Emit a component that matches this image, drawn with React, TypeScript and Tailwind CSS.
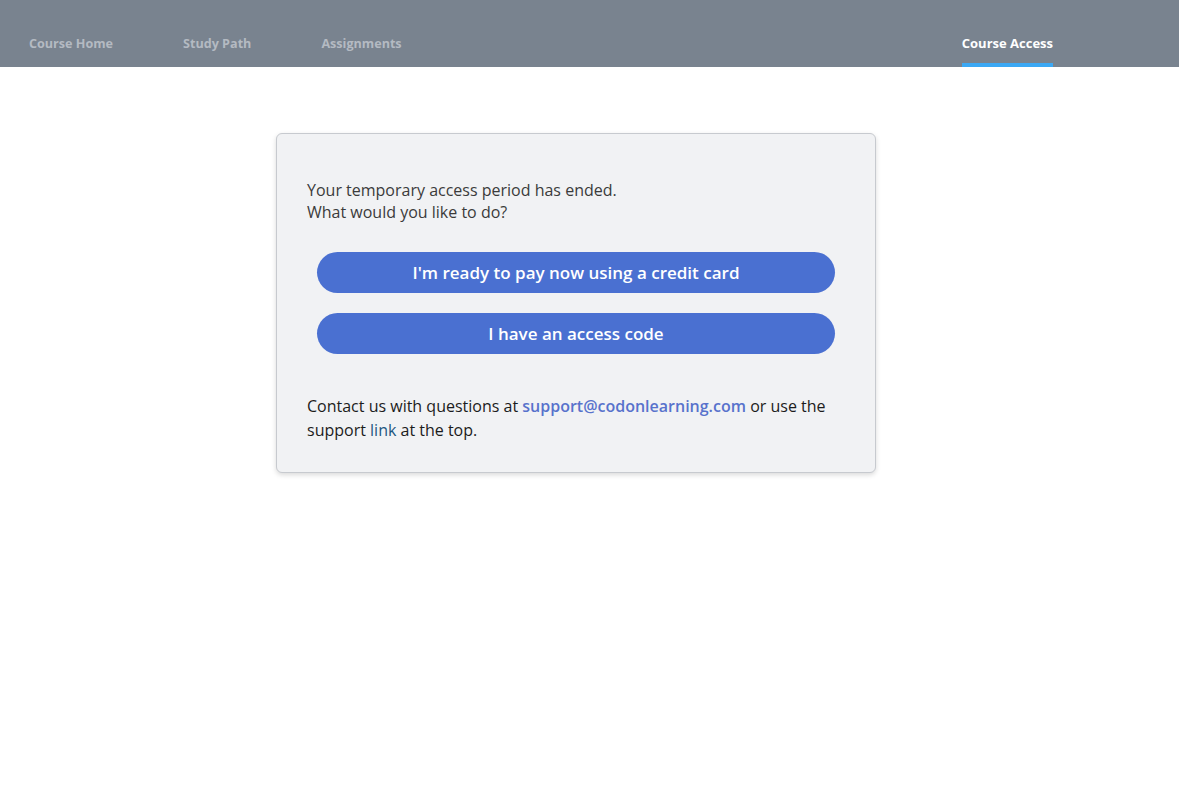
export default function App() {
  const font = { fontFamily: '"Open Sans", "Liberation Sans", sans-serif' }
  return (
    <div className="min-h-screen bg-white" style={font}>
      <header className="flex h-[67px] items-stretch bg-[#79838f]">
        <nav className="flex flex-1 items-stretch pl-[29px]">
          <div className="flex gap-[70px]">
            <a className="flex items-center pt-[21px] text-[12.6px] font-bold text-[#b4bac2]">Course Home</a>
            <a className="flex items-center pt-[21px] text-[12.6px] font-bold text-[#b4bac2]">Study Path</a>
            <a className="flex items-center pt-[21px] text-[12.6px] font-bold text-[#b4bac2]">Assignments</a>
          </div>
          <a className="ml-auto mr-[126px] flex items-center border-b-4 border-[#3ba8f4] pt-[25px] text-[13px] font-bold text-white">
            Course Access
          </a>
        </nav>
      </header>

      <main className="pl-[276px] pt-[66px]">
        <div className="w-[600px] rounded-md border border-[#c7cacf] bg-[#f1f2f4] px-[30px] pb-[30px] pt-[45px] shadow-[0_2px_5px_rgba(0,0,0,0.15)]">
          <p className="text-[16px] leading-[22px] text-[#3b3b3b]">
            Your temporary access period has ended.
            <br />
            What would you like to do?
          </p>
          <div className="mx-[10px] mt-[29px] flex flex-col gap-[20px]">
            <button className="h-[41px] rounded-full bg-[#4a70d1] text-[17px] font-semibold text-white">
              I'm ready to pay now using a credit card
            </button>
            <button className="h-[41px] rounded-full bg-[#4a70d1] text-[17px] font-semibold text-white">
              I have an access code
            </button>
          </div>
          <p className="mt-[40px] text-[16px] leading-[24px] text-[#1c1c1c]">
            Contact us with questions at{' '}
            <a className="font-semibold text-[#5872cc]">support@codonlearning.com</a> or use the support{' '}
            <a className="text-[#1d5780]">link</a> at the top.
          </p>
        </div>
      </main>
    </div>
  )
}
